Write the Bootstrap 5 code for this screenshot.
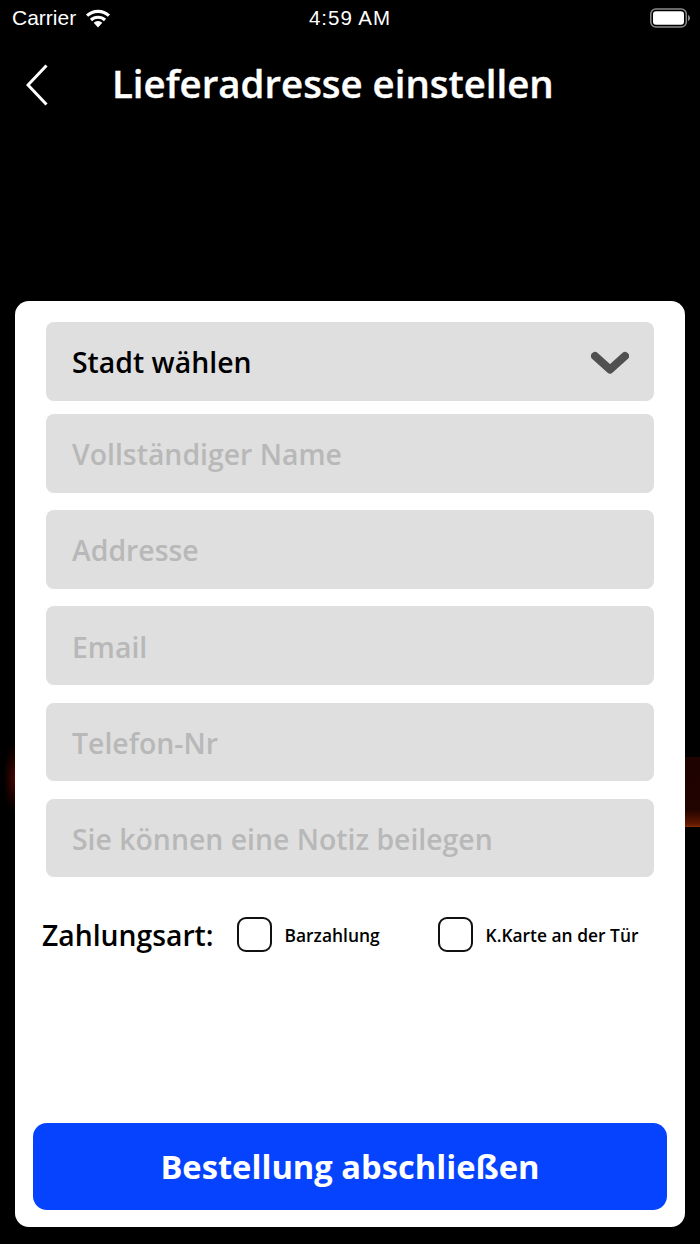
<!DOCTYPE html>
<html lang="de">
<head>
<meta charset="utf-8">
<title>Lieferadresse einstellen</title>
<link href="https://cdn.jsdelivr.net/npm/bootstrap@5.3.0/dist/css/bootstrap.min.css" rel="stylesheet">
<style>
html,body{height:1244px;overflow:hidden}
body{width:700px;font-family:"Open Sans","Liberation Sans",sans-serif;color:#000;
background:
 radial-gradient(ellipse 12px 36px at 15px 778px,rgba(85,8,4,.85),rgba(55,4,0,.45) 60%,transparent 100%) no-repeat,
 linear-gradient(to bottom,rgba(60,5,0,.5) 0,rgba(60,5,0,.55) 75%,rgba(120,30,0,.8) 96%,rgba(150,50,0,.9) 100%) 685px 757px/15px 70px no-repeat,
 #000}
.status-strip{height:36px;padding:0 9px 0 12px;font-family:"Liberation Sans",sans-serif;font-size:21px;color:#fff}
.status-time{flex:1;text-align:center;font-size:20.5px;letter-spacing:1px;padding-right:3px}
.status-left{width:150px}
.status-right{width:150px}
.head-bar{height:97px;padding:0 0 2px 26px;color:#fff}
.back-ico{width:22px;height:42px;margin-top:2px}
.head-title{font-size:38.4px;font-weight:600;margin:0 0 0 64px;line-height:1;-webkit-text-stroke:.4px #fff}
.sheet{margin:168px 15px 0;height:926px;background:#fff;border-radius:14px;border:0;padding:21px 31px 17px}
.field-box{height:78.5px;background:#dfdfdf;border:0;border-radius:8px;padding:2px 26px 0;font-size:28.4px;font-weight:600;color:#000}
.field-box:focus{background:#dfdfdf;box-shadow:none}
.field-box::placeholder{color:#b8b8b8;opacity:1}
.pick-box{height:79px;margin-bottom:13px;padding-right:25px}
.stack{display:flex;flex-direction:column;gap:17.7px}
.pay-row{margin:34px 0 0 -4px;height:46px}
.pay-label{font-size:28.3px;font-weight:600;margin-right:23px;line-height:1;padding-top:2px}
.tick{width:35px;height:35px;border:2px solid #111;border-radius:9px;flex:none;display:block}
.pay-text{font-size:17.4px;font-weight:600;margin-left:13px;line-height:1;padding-top:2px}
.first-opt{width:201px}
.go-btn{margin:auto -13px 0;height:87px;background:#0643ff;border:0;border-radius:14px;color:#fff;font-size:32.7px;font-weight:700;width:634px}
.go-btn:hover{background:#0643ff;color:#fff}
</style>
</head>
<body>
<div class="status-strip d-flex align-items-center">
  <div class="status-left d-flex align-items-center gap-2">
    <span>Carrier</span>
    <svg width="28" height="20" viewBox="0 0 26 19"><path d="M13 18.500 8.900 13.900a6 6 0 0 1 8.200 0Z" fill="#fff"/><path d="M6.300 11.400a9.800 9.800 0 0 1 13.400 0" fill="none" stroke="#fff" stroke-width="3"/><path d="M2.600 7.300a15.300 15.300 0 0 1 20.800 0" fill="none" stroke="#fff" stroke-width="3"/></svg>
  </div>
  <div class="status-time">4:59 AM</div>
  <div class="status-right d-flex justify-content-end">
    <svg width="41" height="20" viewBox="0 0 41 20"><rect x=".8" y="1" width="35.500" height="18" rx="5" fill="none" stroke="#8a8a8a" stroke-width="1.500"/><rect x="3" y="3.200" width="31" height="13.600" rx="3" fill="#fff"/><path d="M38 7v6c1.300-.5 2-1.700 2-3s-.7-2.500-2-3Z" fill="#8a8a8a"/></svg>
  </div>
</div>
<div class="head-bar d-flex align-items-center">
  <svg class="back-ico" viewBox="0 0 22 42"><path d="M20.500 1.500 2 21l18.500 19.500" fill="none" stroke="#fff" stroke-width="3"/></svg>
  <h1 class="head-title">Lieferadresse einstellen</h1>
</div>
<main class="sheet card d-flex flex-column">
  <div class="field-box pick-box d-flex align-items-center justify-content-between">
    <span>Stadt wählen</span>
    <svg width="38" height="24" viewBox="0 0 38 24"><path d="M4 5 19 18.500 34 5" fill="none" stroke="#505050" stroke-width="8" stroke-linecap="round" stroke-linejoin="round"/></svg>
  </div>
  <form class="stack">
    <input class="form-control field-box" placeholder="Vollständiger Name">
    <input class="form-control field-box" placeholder="Addresse">
    <input class="form-control field-box" placeholder="Email">
    <input class="form-control field-box" placeholder="Telefon-Nr">
    <input class="form-control field-box" placeholder="Sie können eine Notiz beilegen">
  </form>
  <div class="pay-row d-flex align-items-center">
    <span class="pay-label">Zahlungsart:</span>
    <div class="d-flex align-items-center first-opt"><span class="tick"></span><span class="pay-text">Barzahlung</span></div>
    <div class="d-flex align-items-center"><span class="tick"></span><span class="pay-text">K.Karte an der Tür</span></div>
  </div>
  <button class="btn go-btn" type="button">Bestellung abschließen</button>
</main>
<script src="https://cdn.jsdelivr.net/npm/bootstrap@5.3.0/dist/js/bootstrap.bundle.min.js"></script>
</body>
</html>
